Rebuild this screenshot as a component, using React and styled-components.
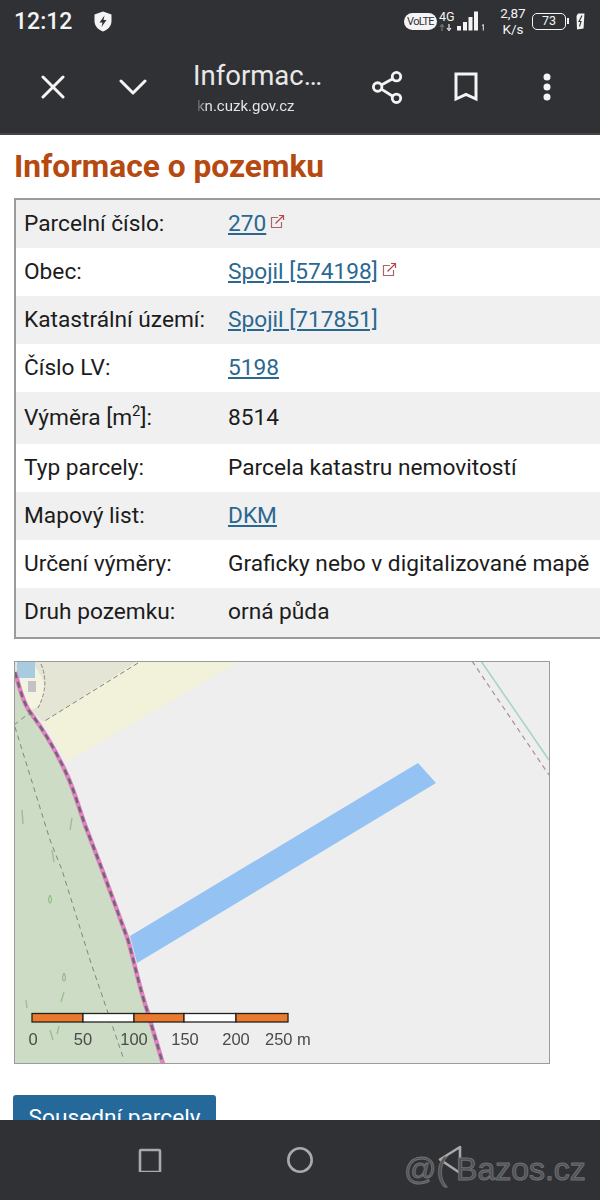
import styled, { createGlobalStyle } from "styled-components";

const rows = [
  { label: "Parcelní číslo:", value: "270", link: true, external: true },
  { label: "Obec:", value: "Spojil [574198]", link: true, external: true },
  { label: "Katastrální území:", value: "Spojil [717851]", link: true },
  { label: "Číslo LV:", value: "5198", link: true },
  { label: <>Výměra [m<sup>2</sup>]:</>, value: "8514" },
  { label: "Typ parcely:", value: "Parcela katastru nemovitostí" },
  { label: "Mapový list:", value: "DKM", link: true },
  { label: "Určení výměry:", value: "Graficky nebo v digitalizované mapě" },
  { label: "Druh pozemku:", value: "orná půda" },
];

const scaleSegments = [
  { x: 32, w: 51, fill: "#ec7a2c" },
  { x: 83, w: 51, fill: "#ffffff" },
  { x: 134, w: 50, fill: "#ec7a2c" },
  { x: 184, w: 52, fill: "#ffffff" },
  { x: 236, w: 52, fill: "#ec7a2c" },
];

const scaleLabels = [
  { x: 33, text: "0" },
  { x: 83, text: "50" },
  { x: 134, text: "100" },
  { x: 185, text: "150" },
  { x: 236, text: "200" },
  { x: 288, text: "250 m" },
];

// hranice parcely, same curve is used for the green area edge and both strokes
const boundary =
  "M15 672C20 690 24 704 30 712C45 732 58 755 67 775C74 790 78 805 85 825L103 872L128 940C135 965 140 990 147 1010L163 1064";

const ExternalIcon = () => (
  <ExternalSvg viewBox="0 0 16 16" fill="none" stroke="#a8666c" strokeWidth="1.2">
    <path d="M9 3.5H2.5v10h10V8" />
    <path d="M6.5 9.5L14.5 1.5M10 1.5h4.5V6" stroke="#b5484f" />
  </ExternalSvg>
);

const ParcelMap = () => (
  <MapSvg viewBox="15 662 534 401" preserveAspectRatio="none">
    <rect x="14" y="661" width="536" height="403" fill="#eeeeef" />
    <path d="M138 661L240 661L67 762L43 722Z" fill="#f2f1da" />
    <path d="M14 661H138L43 722L36 716L28 710L15 672Z" fill="#e5e5d6" />
    <path d="M16 661H30Q48 680 44 695Q40 708 30 710L22 690Z" fill="#f4f3e1" />
    <rect x="17" y="662" width="18" height="16" fill="#a9cbe0" />
    <rect x="28" y="681" width="8" height="11" fill="#c5c2c6" />
    <path d={`${boundary}H14Z`} fill="#cddcc4" />
    <path d={boundary} fill="none" stroke="#e27fc6" strokeWidth="4.5" />
    <path d={boundary} fill="none" stroke="#6b6b6b" strokeWidth="2.5" strokeDasharray="6 4" />
    <path d="M138 663L43 722" fill="none" stroke="#858579" strokeWidth="1" strokeDasharray="5 3" />
    <path d="M41 664Q50 685 38 708" fill="none" stroke="#85857a" strokeWidth="1" strokeDasharray="4 2" />
    <path d="M14 725L28 714L36 716M15 727L50 840L62 870L90 960L124 1060" fill="none" stroke="#7d8a78" strokeWidth="1" strokeDasharray="5 4" />
    <path d="M481 661L549 760" fill="none" stroke="#a9d3c8" strokeWidth="1.6" />
    <path d="M472 661L549 775" fill="none" stroke="#a88f98" strokeWidth="1.2" strokeDasharray="5 4" />
    <path d="M130 936L418 763L436 783L137 963Z" fill="#94c2f2" />
    <path d="M22 810l1 14M72 818l-2 12M64 992l-3 10M52 850l2 12M50 1030l3 10M59 1026l-2 8M26 1000l1 8" stroke="#9cbf92" strokeWidth="1.4" fill="none" />
    <path d="M64 973q-3 6 0 8q3 -2 0 -8M50 895q-3 6 0 8q3 -2 0 -8" stroke="#96ba8d" strokeWidth="1.2" fill="none" />
    {scaleSegments.map((seg) => (
      <rect key={seg.x} x={seg.x} y="1013.5" width={seg.w} height="8.5" fill={seg.fill} stroke="#222" strokeWidth="1.3" />
    ))}
    {scaleLabels.map((item, i) => (
      <ScaleText key={item.text} x={i === 5 ? item.x - 23 : item.x} y="1045" textAnchor={i === 5 ? "start" : "middle"}>
        {item.text}
      </ScaleText>
    ))}
  </MapSvg>
);

export default function App() {
  return (
    <Screen>
      <GlobalStyle />
      <Header>
        <StatusBar>
          <Clock>12:12</Clock>
          <svg width="18" height="21" viewBox="0 0 18 21">
            <path d="M9 0.5L17.5 3.5V10C17.5 15 14 18.8 9 20.5C4 18.8 0.5 15 0.5 10V3.5Z" fill="#f4f4f4" />
            <path d="M10.5 4.5L5.5 11.5H8.5L7.5 16L12.5 9H9.5Z" fill="#303135" />
          </svg>
          <StatusRight>
            <VolteBadge>VoLTE</VolteBadge>
            <NetworkType>
              4G
              <svg width="14" height="7" viewBox="0 0 14 7">
                <path d="M3 7V2M1 3l2-2.5L5 3" stroke="#777" strokeWidth="1.2" fill="none" />
                <path d="M10 0V5M8 4l2 2.5L12 4" stroke="#eee" strokeWidth="1.2" fill="none" />
              </svg>
            </NetworkType>
            <svg width="28" height="20" viewBox="0 0 28 20">
              <rect x="0" y="15" width="4" height="4.5" fill="#f4f4f4" />
              <rect x="6" y="11" width="4" height="8.5" fill="#f4f4f4" />
              <rect x="11.5" y="6" width="4" height="13.5" fill="#f4f4f4" />
              <rect x="17" y="0.5" width="4" height="19" fill="#f4f4f4" />
              <path d="M25 14.5L26.3 13.8V19.5" stroke="#ddd" strokeWidth="1.1" fill="none" />
            </svg>
            <Speed>
              2,87
              <br />
              K/s
            </Speed>
            <Battery>73</Battery>
            <svg width="9" height="17" viewBox="0 0 9 17">
              <path d="M2 0.5H8.5L7.5 15.5L1 16.5L0.5 3Z" fill="#f4f4f4" />
              <path d="M6 2.5L3 8.5H5L3.5 13.5" stroke="#303135" strokeWidth="1.1" fill="none" />
            </svg>
          </StatusRight>
        </StatusBar>
        <Toolbar>
          <ToolIcon $after={54}>
            <svg width="24" height="24" viewBox="0 0 24 24" stroke="#f4f4f4" strokeWidth="3" strokeLinecap="round" fill="none">
              <path d="M2 2L22 22M22 2L2 22" />
            </svg>
          </ToolIcon>
          <ToolIcon $after={46}>
            <svg width="28" height="18" viewBox="0 0 28 18" stroke="#f4f4f4" strokeWidth="3" strokeLinecap="round" strokeLinejoin="round" fill="none">
              <path d="M2 3L14 15L26 3" />
            </svg>
          </ToolIcon>
          <TitleBlock>
            <PageTitle>Informac…</PageTitle>
            <PageUrl>kn.cuzk.gov.cz</PageUrl>
          </TitleBlock>
          <ToolIcon $after={50}>
            <svg width="32" height="34" viewBox="0 0 34 36" stroke="#f4f4f4" strokeWidth="3" fill="none">
              <circle cx="26" cy="7" r="4.5" />
              <circle cx="6" cy="18" r="4.5" />
              <circle cx="26" cy="30" r="4.5" />
              <path d="M10 15.8L22 9.2M10 20.2L22 27.8" />
            </svg>
          </ToolIcon>
          <ToolIcon $after={65}>
            <svg width="24" height="30" viewBox="0 0 24 30" stroke="#f4f4f4" strokeWidth="3" fill="none">
              <path d="M2 2H22V27L12 22.5L2 27Z" />
            </svg>
          </ToolIcon>
          <ToolIcon>
            <svg width="8" height="30" viewBox="0 0 8 30" fill="#f4f4f4">
              <circle cx="4" cy="5" r="3.5" />
              <circle cx="4" cy="15" r="3.5" />
              <circle cx="4" cy="25" r="3.5" />
            </svg>
          </ToolIcon>
        </Toolbar>
      </Header>

      <Content>
        <Heading>Informace o pozemku</Heading>
        <InfoTable>
          <tbody>
            {rows.map((row) => (
              <tr key={row.value}>
                <LabelCell>{row.label}</LabelCell>
                <ValueCell>
                  {row.link ? <ValueLink href="#">{row.value}</ValueLink> : row.value}
                  {row.external && <ExternalIcon />}
                </ValueCell>
              </tr>
            ))}
          </tbody>
        </InfoTable>
        <MapFrame>
          <ParcelMap />
        </MapFrame>
        <NeighbourButton>Sousední parcely</NeighbourButton>
      </Content>

      <NavBar>
        <svg width="24" height="24" viewBox="0 0 24 24" fill="none" stroke="#a9a9ab" strokeWidth="2.6">
          <rect x="2" y="2" width="20" height="22" rx="1" />
        </svg>
        <svg width="28" height="28" viewBox="0 0 28 28" fill="none" stroke="#a9a9ab" strokeWidth="2.6">
          <circle cx="14" cy="14" r="11.7" />
        </svg>
        <svg width="24" height="30" viewBox="0 0 24 30" fill="none" stroke="#a9a9ab" strokeWidth="2.6" strokeLinejoin="round">
          <path d="M22 2V28L2 14.5Z" />
        </svg>
        <Watermark>@( Bazos.cz</Watermark>
      </NavBar>
    </Screen>
  );
}

const GlobalStyle = createGlobalStyle`
  html, body {
    margin: 0;
    padding: 0;
    background: #fff;
  }
  * {
    box-sizing: border-box;
  }
`;

const Screen = styled.div`
  position: relative;
  width: 600px;
  height: 1200px;
  display: flex;
  flex-direction: column;
  overflow: hidden;
  font-family: Roboto, "Liberation Sans", sans-serif;
  background: #fff;
`;

const Header = styled.header`
  flex: none;
  height: 135px;
  background: #303135;
  border-bottom: 2px solid #45464a;
`;

const StatusBar = styled.div`
  height: 42px;
  display: flex;
  align-items: center;
  padding: 0 15px 0 14px;
  gap: 22px;
  color: #f4f4f4;
`;

const Clock = styled.span`
  font-size: 23px;
  font-weight: 500;
`;

const StatusRight = styled.div`
  margin-left: auto;
  display: flex;
  align-items: center;
`;

const VolteBadge = styled.span`
  width: 33px;
  height: 17px;
  border-radius: 9px;
  background: #f4f4f4;
  color: #303135;
  font-size: 11px;
  line-height: 17px;
  text-align: center;
  letter-spacing: -0.7px;
  white-space: nowrap;
`;

const NetworkType = styled.span`
  width: 17px;
  margin: 0 1px 0 2px;
  display: flex;
  flex-direction: column;
  font-size: 12.5px;
  line-height: 12px;
  svg {
    margin-top: 1px;
  }
`;

const Speed = styled.span`
  width: 26px;
  margin: 0 6px 0 15px;
  font-size: 13.5px;
  line-height: 16px;
  text-align: center;
`;

const Battery = styled.span`
  position: relative;
  width: 34px;
  height: 17px;
  margin-right: 10px;
  border: 1.5px solid #f4f4f4;
  border-radius: 5px;
  font-size: 12.5px;
  line-height: 14px;
  text-align: center;
  &::after {
    content: "";
    position: absolute;
    right: -4px;
    top: 4px;
    width: 2px;
    height: 6px;
    background: #f4f4f4;
  }
`;

const Toolbar = styled.div`
  height: 91px;
  display: flex;
  align-items: center;
  padding-bottom: 2px;
  padding-left: 41px;
`;

const ToolIcon = styled.span`
  display: flex;
  align-items: center;
  justify-content: center;
  margin-right: ${(props) => props.$after || 0}px;
`;

const TitleBlock = styled.div`
  width: 179px;
  display: flex;
  flex-direction: column;
  margin-top: 1px;
`;

const PageTitle = styled.div`
  font-size: 27.5px;
  line-height: 34px;
  color: #e8e8e8;
  white-space: nowrap;
`;

const PageUrl = styled.div`
  padding-left: 4px;
  margin-top: 3px;
  font-size: 15px;
  line-height: 20px;
  color: #e4e4e4;
  white-space: nowrap;
  -webkit-mask-image: linear-gradient(90deg, transparent 2px, #000 14px);
  mask-image: linear-gradient(90deg, transparent 2px, #000 14px);
`;

const Content = styled.main`
  flex: 1;
  min-height: 0;
  overflow: hidden;
  padding: 14px 0 0 14px;
`;

const Heading = styled.h1`
  margin: 0 0 14px;
  font-size: 31.7px;
  line-height: 35px;
  font-weight: 700;
  color: #b5490f;
`;

const InfoTable = styled.table`
  width: 640px;
  border-collapse: collapse;
  border: 2px solid #9b9b9b;
  border-radius: 3px;
  font-size: 22.7px;
  color: #1c1c1c;
  tr:nth-child(odd) {
    background: #f0f0f0;
  }
  tr {
    height: 48px;
  }
  tr:first-child {
    height: 49px;
  }
  tr:nth-child(5) {
    height: 52px;
  }
  tr:last-child {
    height: 50px;
  }
  sup {
    font-size: 15px;
    line-height: 0;
  }
`;

const LabelCell = styled.td`
  width: 213px;
  padding: 0 0 2px 8px;
`;

const ValueCell = styled.td`
  padding: 0 0 2px 0;
  white-space: nowrap;
`;

const ValueLink = styled.a`
  color: #2a6891;
  text-decoration: underline;
`;

const ExternalSvg = styled.svg`
  width: 16px;
  height: 16px;
  margin-left: 3px;
  vertical-align: 1px;
`;

const MapFrame = styled.div`
  width: 536px;
  height: 403px;
  margin-top: 22px;
  border: 1.5px solid #9b9b9b;
  overflow: hidden;
`;

const MapSvg = styled.svg`
  display: block;
  width: 100%;
  height: 100%;
  filter: blur(0.5px);
`;

const ScaleText = styled.text`
  font-family: "Liberation Sans", Arial, sans-serif;
  font-size: 16.5px;
  fill: #4a4a4a;
`;

const NeighbourButton = styled.button`
  display: block;
  width: 203px;
  height: 50px;
  margin: 31px 0 0 -1px;
  padding: 0 0 6px;
  border: none;
  border-radius: 3px;
  background: #25699b;
  color: #fff;
  font-family: Roboto, "Liberation Sans", sans-serif;
  font-size: 22.7px;
`;

const NavBar = styled.nav`
  position: relative;
  flex: none;
  height: 80px;
  background: #303135;
  display: flex;
  align-items: center;
  gap: 124px;
  padding-left: 138px;
`;

const Watermark = styled.span`
  position: absolute;
  left: 404px;
  top: 31px;
  font-size: 32px;
  font-family: "Liberation Sans", sans-serif;
  color: #4f5053;
  -webkit-text-stroke: 1px #6e6f72;
  white-space: nowrap;
`;
